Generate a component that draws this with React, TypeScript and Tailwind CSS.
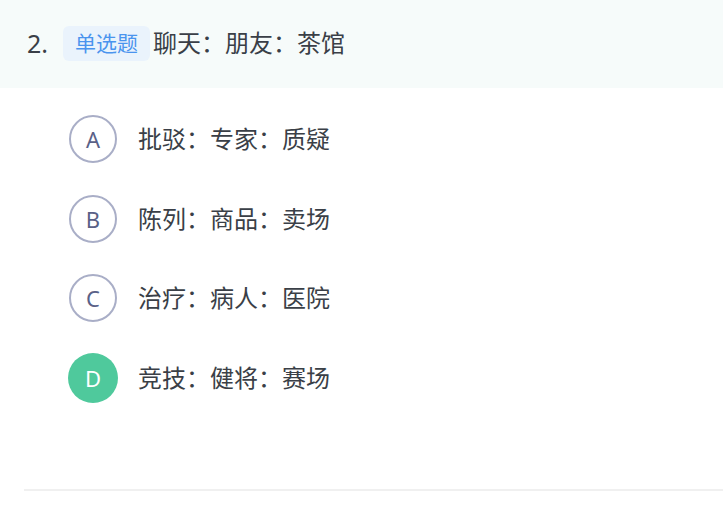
import React from "react";

const options = [
  { key: "A", text: "批驳：专家：质疑", selected: false },
  { key: "B", text: "陈列：商品：卖场", selected: false },
  { key: "C", text: "治疗：病人：医院", selected: false },
  { key: "D", text: "竞技：健将：赛场", selected: true },
];

const font = {
  fontFamily:
    '"Noto Sans", "Noto Sans CJK SC", "Microsoft YaHei", sans-serif',
};

export default function App() {
  return (
    <div className="w-[723px] h-[510px] bg-white overflow-hidden" style={font}>
      <div className="h-[88px] bg-[#f6fbfa] flex items-center pl-[27px] pb-[2px]">
        <span className="w-[36px] text-[25px] leading-none text-[#3a3f47]">2.</span>
        <span className="h-[35px] px-[12px] rounded-[6px] bg-[#eaf3fc] text-[#4a94ee] text-[21px] leading-[35px] flex items-center">
          单选题
        </span>
        <span className="ml-[3px] text-[24px] leading-none text-[#3a3f47]">
          聊天：朋友：茶馆
        </span>
      </div>
      <div className="flex flex-col gap-[31.7px] pt-[27px] pl-[69px]">
        {options.map((o) => (
          <div key={o.key} className="flex items-center h-[48px]">
            {o.selected ? (
              <div className="w-[50px] h-[50px] -m-[1px] rounded-full bg-[#4fc99c] flex items-center justify-center text-white text-[22px] font-normal leading-none shrink-0">
                {o.key}
              </div>
            ) : (
              <div className="w-[48px] h-[48px] rounded-full border-2 border-[#a9aec7] flex items-center justify-center text-[#5a6187] text-[22px] font-normal leading-none shrink-0">
                {o.key}
              </div>
            )}
            <span className="ml-[21px] text-[24px] leading-none text-[#3a3f47]">
              {o.text}
            </span>
          </div>
        ))}
      </div>
      <div className="mt-[87px] ml-[24px] h-[2px] bg-[#f0f0f0]" />
    </div>
  );
}
